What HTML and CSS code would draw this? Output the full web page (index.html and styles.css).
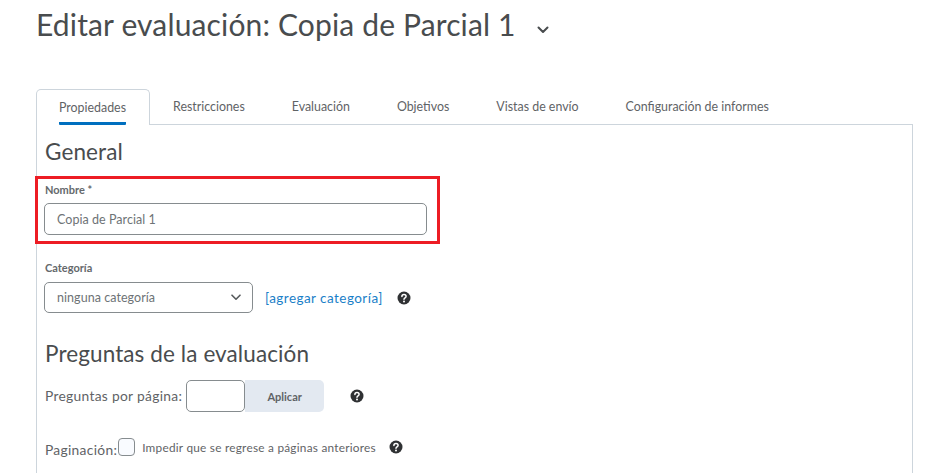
FILE: index.html
```html
<!DOCTYPE html>
<html lang="es">
<head>
  <meta charset="UTF-8" />
  <title>Editar evaluación</title>
  <link rel="stylesheet" href="styles.css">
</head>
<body>
  <div class="page">
    <div class="title-row">
      <h1>Editar evaluación: Copia de Parcial 1</h1>
      <svg class="title-chevron" width="12" height="8" viewBox="0 0 12 8"><path d="M1.500 1.500 6 6l4.500-4.500" fill="none" stroke="#494c4e" stroke-width="2" stroke-linecap="round" stroke-linejoin="round"/></svg>
    </div>

    <div class="tabs">
      <div class="tab active"><span>Propiedades</span></div>
      <div class="tab"><span>Restricciones</span></div>
      <div class="tab"><span>Evaluación</span></div>
      <div class="tab"><span>Objetivos</span></div>
      <div class="tab"><span>Vistas de envío</span></div>
      <div class="tab"><span>Configuración de informes</span></div>
    </div>

    <div class="panel">
      <h2 class="general">General</h2>

      <div class="name-box">
        <label class="field-label">Nombre *</label>
        <input class="text-input" type="text" value="Copia de Parcial 1" />
      </div>

      <label class="field-label category-label">Categoría</label>
      <div class="category-row">
        <div class="select">
          <span>ninguna categoría</span>
          <svg width="10" height="7" viewBox="0 0 10 7"><path d="M1 1.200 5 5.200l4-4" fill="none" stroke="#565a5c" stroke-width="1.600" stroke-linecap="round" stroke-linejoin="round"/></svg>
        </div>
        <a class="add-link" href="#">[agregar categoría]</a>
        <svg class="help" width="14" height="14" viewBox="0 0 14 14"><use href="#help-icon"/></svg>
      </div>

      <h2 class="questions">Preguntas de la evaluación</h2>

      <div class="per-page-row">
        <span class="row-label">Preguntas por página:</span>
        <input class="number-input" type="text" />
        <button class="apply" type="button">Aplicar</button>
        <svg class="help" width="14" height="14" viewBox="0 0 14 14"><use href="#help-icon"/></svg>
      </div>

      <div class="paging-row">
        <span class="row-label paging-label">Paginación:</span>
        <span class="checkbox"></span>
        <span class="check-text">Impedir que se regrese a páginas anteriores</span>
        <svg class="help" width="14" height="14" viewBox="0 0 14 14"><use href="#help-icon"/></svg>
      </div>
    </div>
  </div>

  <svg width="0" height="0" class="defs">
    <symbol id="help-icon" viewBox="0 0 14 14">
      <circle cx="7" cy="7" r="6.500" fill="#2f3133"/>
      <path d="M4.900 5.400C4.900 4.200 5.900 3.500 7 3.500c1.200 0 2.100.8 2.100 1.800 0 1.600-2.100 1.500-2.100 3" fill="none" stroke="#fff" stroke-width="1.500" stroke-linecap="round"/>
      <circle cx="7" cy="10.500" r="1" fill="#fff"/>
    </symbol>
  </svg>
</body>
</html>
```

FILE: styles.css
```css
body {
  margin: 0;
  height: 473px;
  overflow: hidden;
  background: #fff;
  font-family: 'Lato', sans-serif;
  color: #494c4e;
}

.page {
  width: 877px;
  margin-left: 36px;
  height: 473px;
  display: flex;
  flex-direction: column;
}

.defs {
  position: absolute;
}

.title-row {
  display: flex;
  align-items: center;
  height: 48px;
  margin-bottom: 41px;
}

h1 {
  margin: 0;
  font-size: 30px;
  font-weight: 400;
  letter-spacing: 0.15px;
  line-height: 48px;
}

.title-chevron {
  margin: 12px 0 0 21px;
}

.tabs {
  display: flex;
  height: 36px;
  box-sizing: border-box;
}

.tab {
  padding: 0 24px 0 23px;
  font-size: 12.400px;
  line-height: 36px;
  color: #5f6366;
  border-bottom: 1px solid #cdd5dc;
}

.tab:last-child {
  flex: 1;
}

.tab.active {
  border: 1px solid #cdd5dc;
  border-bottom: none;
  border-radius: 5px 5px 0 0;
  padding: 0 23px 0 22px;
}

.tab.active span {
  display: inline-block;
  height: 31px;
  line-height: 34px;
  border-bottom: 3px solid #006fbf;
  border-radius: 1px;
}

.panel {
  flex: 1;
  border: 1px solid #cdd5dc;
  border-top: none;
  border-bottom: none;
  padding: 0 8px;
}

h2 {
  margin: 0;
  font-size: 22.500px;
  font-weight: 400;
  letter-spacing: 0.1px;
  color: #494c4e;
}

.general {
  line-height: 28px;
  margin-top: 13px;
}

.name-box {
  margin: 10px 0 0 -10px;
  width: 405px;
  height: 68px;
  border: 3px solid #ed1c24;
  box-sizing: border-box;
  padding: 0 6px;
  display: flex;
  flex-direction: column;
}

.field-label {
  display: block;
  font-size: 11px;
  font-weight: 700;
  line-height: 14px;
  color: #65696c;
}

.name-box .field-label {
  margin: 4px 0 0 1px;
}

.text-input {
  margin-top: 6px;
  width: 383px;
  height: 32px;
  box-sizing: border-box;
  border: 1px solid #868c8f;
  border-radius: 5px;
  padding: 0 12px;
  font: 12.500px 'Lato', sans-serif;
  letter-spacing: 0.05px;
  color: #6e7376;
}

.category-label {
  margin-top: 17px;
}

.category-row {
  display: flex;
  align-items: center;
  margin: 7px 0 0 -1px;
}

.select {
  width: 209px;
  height: 31px;
  box-sizing: border-box;
  border: 1px solid #868c8f;
  border-radius: 5px;
  padding: 0 11px 0 12px;
  display: flex;
  align-items: center;
  justify-content: space-between;
  font-size: 12.500px;
  letter-spacing: 0.05px;
  color: #6e7376;
}

.add-link {
  margin-left: 12px;
  font-size: 13.500px;
  letter-spacing: 0.45px;
  color: #1a80c8;
  text-decoration: none;
}

.category-row .help {
  margin-left: 14px;
}

.questions {
  line-height: 28px;
  margin-top: 27px;
}

.per-page-row {
  display: flex;
  align-items: center;
  margin-top: 12px;
  height: 32px;
}

.row-label {
  padding-bottom: 2px;
  font-size: 13.800px;
  letter-spacing: 0.3px;
  color: #5f6366;
}

.number-input {
  margin-left: 4px;
  width: 59px;
  height: 32px;
  box-sizing: border-box;
  border: 1px solid #868c8f;
  border-radius: 5px;
}

.apply {
  width: 79px;
  height: 32px;
  border: none;
  border-radius: 0 5px 5px 0;
  background: #e3e9f1;
  font: 700 11px 'Lato', sans-serif;
  color: #5f6366;
}

.per-page-row .help {
  margin-left: 26px;
}

.paging-row {
  display: flex;
  align-items: center;
  margin-top: 26px;
  height: 18px;
}

.paging-label {
  padding-bottom: 0;
  margin-top: 5px;
}

.checkbox {
  width: 17px;
  height: 18px;
  margin-left: 1px;
  box-sizing: border-box;
  border: 1px solid #868c8f;
  border-radius: 4px;
  background: #f9fbff;
}

.check-text {
  margin-left: 7px;
  font-size: 11.800px;
  letter-spacing: 0.25px;
  color: #5f6366;
}

.paging-row .help {
  margin-left: 13px;
}
```
